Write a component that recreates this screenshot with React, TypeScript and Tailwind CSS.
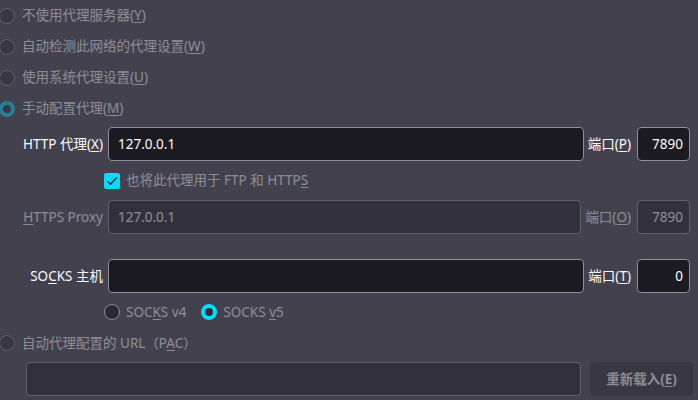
import React from "react";

const font = { fontFamily: '"Noto Sans", "Noto Sans CJK SC", sans-serif' };

function Radio({ checked, className = "" }: { checked?: boolean; className?: string }) {
  return checked ? (
    <span className={"box-border inline-block h-[16px] w-[16px] shrink-0 rounded-full border-[4px] border-[#00ddff] bg-[#2b2a33] " + className} />
  ) : (
    <span className={"box-border inline-block h-[16px] w-[16px] shrink-0 rounded-full border border-[#8f8f9d] bg-[#2b2a33] " + className} />
  );
}

function RadioRow({ label, k, checked }: { label: string; k: string; checked?: boolean }) {
  return (
    <div className="flex h-[31px] items-center opacity-40">
      <Radio checked={checked} className="ml-[-1px]" />
      <span className="ml-[7px]">
        {label}(<u className="underline-offset-2">{k}</u>)
      </span>
    </div>
  );
}

function Row({
  label,
  value,
  portLabel,
  port,
  disabled,
}: {
  label: React.ReactNode;
  value: string;
  portLabel: React.ReactNode;
  port: string;
  disabled?: boolean;
}) {
  const inputCls = "border-[#8f8f9d] bg-[#1c1b22]";
  return (
    <div className={"flex h-[34px] items-center pr-[8px] " + (disabled ? "opacity-40" : "")}>
      <div className="w-[103px] shrink-0 text-right whitespace-nowrap">{label}</div>
      <div className={"ml-[5px] flex h-[34px] flex-1 items-center rounded-[4px] border pl-[9px] " + inputCls}>
        {value}
      </div>
      <div className="ml-[4px] whitespace-nowrap">{portLabel}</div>
      <div className={"ml-[6px] flex h-[34px] w-[53px] shrink-0 items-center justify-end rounded-[4px] border pr-[6px] " + inputCls}>
        {port}
      </div>
    </div>
  );
}

export default function App() {
  return (
    <div className="h-[400px] w-[698px] overflow-hidden bg-[#42414d] text-[13.5px] text-[#fbfbfe]" style={font}>
      <RadioRow label="不使用代理服务器" k="Y" />
      <RadioRow label="自动检测此网络的代理设置" k="W" />
      <RadioRow label="使用系统代理设置" k="U" />
      <RadioRow label="手动配置代理" k="M" checked />
      <div className="mt-[3px]">
        <Row
          label={<>HTTP 代理(<u className="underline-offset-2">X</u>)</>}
          value="127.0.0.1"
          portLabel={<>端口(<u className="underline-offset-2">P</u>)</>}
          port="7890"
        />
      </div>
      <div className="flex h-[39px] items-center pl-[104px]">
        <span className="flex h-[16px] w-[16px] items-center justify-center rounded-[2px] bg-[#00ddff]">
          <svg width="12" height="12" viewBox="0 0 12 12" fill="none">
            <path d="M1.5 6.2 L4.5 9.2 L10.5 2.8" stroke="#2b2a33" strokeWidth="1.4" strokeLinecap="round" strokeLinejoin="round" />
          </svg>
        </span>
        <span className="ml-[6px] opacity-40">
          也将此代理用于 FTP 和 HTTP<u className="underline-offset-2">S</u>
        </span>
      </div>
      <Row
        disabled
        label={<><u className="underline-offset-2">H</u>TTPS Proxy</>}
        value="127.0.0.1"
        portLabel={<>端口(<u className="underline-offset-2">O</u>)</>}
        port="7890"
      />
      <div className="mt-[25px]">
        <Row
          label={<>SO<u className="underline-offset-2">C</u>KS 主机</>}
          value=""
          portLabel={<>端口(<u className="underline-offset-2">T</u>)</>}
          port="0"
        />
      </div>
      <div className="flex h-[38px] items-center pl-[104px]">
        <Radio />
        <span className="ml-[6px] opacity-40">
          SOC<u className="underline-offset-2">K</u>S v4
        </span>
        <Radio checked className="ml-[15px]" />
        <span className="ml-[6px] opacity-40">
          SOCKS <u className="underline-offset-2">v</u>5
        </span>
      </div>
      <div className="flex h-[24px] items-center opacity-40">
        <Radio className="ml-[-1px]" />
        <span className="ml-[7px]">
          自动代理配置的 URL（P<u className="underline-offset-2">A</u>C）
        </span>
      </div>
      <div className="mt-[7px] flex h-[34px] items-center pl-[26px] pr-[5px] opacity-40">
        <div className="h-[34px] flex-1 rounded-[4px] border border-[#8f8f9d] bg-[#1c1b22]" />
        <div className="ml-[9px] flex h-[34px] w-[103px] items-center justify-center rounded-[4px] bg-[#2b2a33] font-bold">
          重新载入(<u className="underline-offset-2">E</u>)
        </div>
      </div>
    </div>
  );
}
